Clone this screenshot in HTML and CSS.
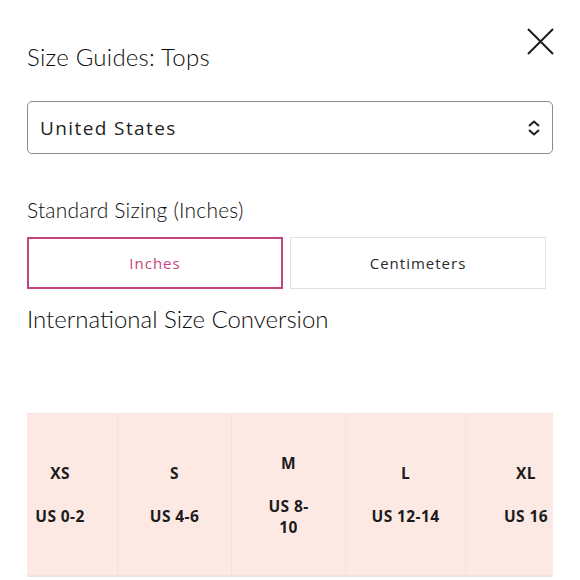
FILE: index.html
```html
<!DOCTYPE html>
<html lang="en">
<head>
<meta charset="utf-8">
<title>Size Guides: Tops</title>
<link rel="stylesheet" href="styles.css">
</head>
<body>
<div class="sheet">
  <header class="header">
    <h1 class="title">Size Guides: Tops</h1>
    <button class="close" aria-label="Close">
      <svg width="27" height="27" viewBox="0 0 27 27"><path d="M1 1L26 26M26 1L1 26" stroke="#1c1c1c" stroke-width="2" fill="none"/></svg>
    </button>
  </header>

  <div class="select">
    <span class="select-value">United States</span>
    <svg class="select-icon" width="14" height="16" viewBox="0 0 14 16"><path d="M2 6L7 1.5L12 6M2 10L7 14.5L12 10" stroke="#1c1c1c" stroke-width="2" fill="none"/></svg>
  </div>

  <h2 class="subhead">Standard Sizing (Inches)</h2>

  <div class="tabs">
    <button class="tab tab-active">Inches</button>
    <button class="tab">Centimeters</button>
  </div>

  <h2 class="section">International Size Conversion</h2>

  <div class="table-wrap">
    <div class="row">
      <div class="cell cell-first"><span>XS</span><span class="blank"></span><span>US 0-2</span></div>
      <div class="cell cell-s"><span>S</span><span class="blank"></span><span>US 4-6</span></div>
      <div class="cell cell-m"><span>M</span><span class="blank"></span><span class="wrap">US 8-<wbr>10</span></div>
      <div class="cell cell-l"><span>L</span><span class="blank"></span><span>US 12-14</span></div>
      <div class="cell cell-xl"><span>XL</span><span class="blank"></span><span>US 16</span></div>
    </div>
  </div>
</div>
</body>
</html>
```

FILE: styles.css
```css
* { box-sizing: border-box; }
html, body { margin: 0; padding: 0; background: #fff; }
body { font-family: "Open Sans", "Liberation Sans", sans-serif; color: #1c1c1c; overflow: hidden; }

.sheet { padding: 0 27px; width: 580px; }

.header { display: flex; justify-content: space-between; align-items: flex-start; padding-top: 28px; }
.title { margin: 9px 0 0; font-family: Lato, sans-serif; font-weight: 300; font-size: 24px; line-height: 40px; letter-spacing: 0.25px; color: #0d0d0d; }
.close { margin: 0; padding: 0; border: 0; background: none; width: 27px; height: 27px; display: block; margin-right: -1px; }
.close svg { display: block; }

.select { margin-top: 24px; height: 53px; border: 1px solid #8c8c8c; border-radius: 5px; display: flex; align-items: center; justify-content: space-between; padding: 0 11px 0 12px; }
.select-value { font-size: 19px; letter-spacing: 1.4px; color: #1f1f1f; }
.select-icon { display: block; }

.subhead { margin: 41px 0 0; font-family: Lato, sans-serif; font-weight: 300; font-size: 21px; line-height: 30px; letter-spacing: 0.2px; color: #0d0d0d; }

.tabs { display: flex; gap: 7px; margin-top: 12px; }
.tab { width: 256px; height: 52px; background: #fff; border: 1px solid #e0e0e0; font-family: "Open Sans", sans-serif; font-size: 15px; letter-spacing: 1px; color: #2a2a2a; padding: 0; }
.tab-active { border: 2px solid #c4457d; color: #c4457d; }

.section { margin: 13px 0 0; font-family: Lato, sans-serif; font-weight: 300; font-size: 24px; line-height: 34px; color: #0d0d0d; }

.table-wrap { margin-top: 77px; width: 526px; overflow: hidden; border-top: 1px solid #efe3dd; }
.row { display: flex; width: 560px; }
.cell { flex: none; height: 163px; padding-top: 2px; background: #fde9e4; border-right: 1px solid #efe3dd; border-bottom: 2px solid #efe3dd; display: flex; flex-direction: column; justify-content: center; align-items: center; text-align: center; font-weight: 700; font-size: 15.5px; line-height: 21.5px; letter-spacing: 0.4px; color: #1c1c1c; }
.cell span { display: block; }
.cell .blank { height: 21.5px; }
.cell-first { width: 91px; padding-right: 24px; }
.cell-s { width: 114px; }
.cell-m { width: 114px; }
.cell-m .wrap { width: 48px; }
.cell-l { width: 120px; }
.cell-xl { width: 120px; border-right: 0; }
```
